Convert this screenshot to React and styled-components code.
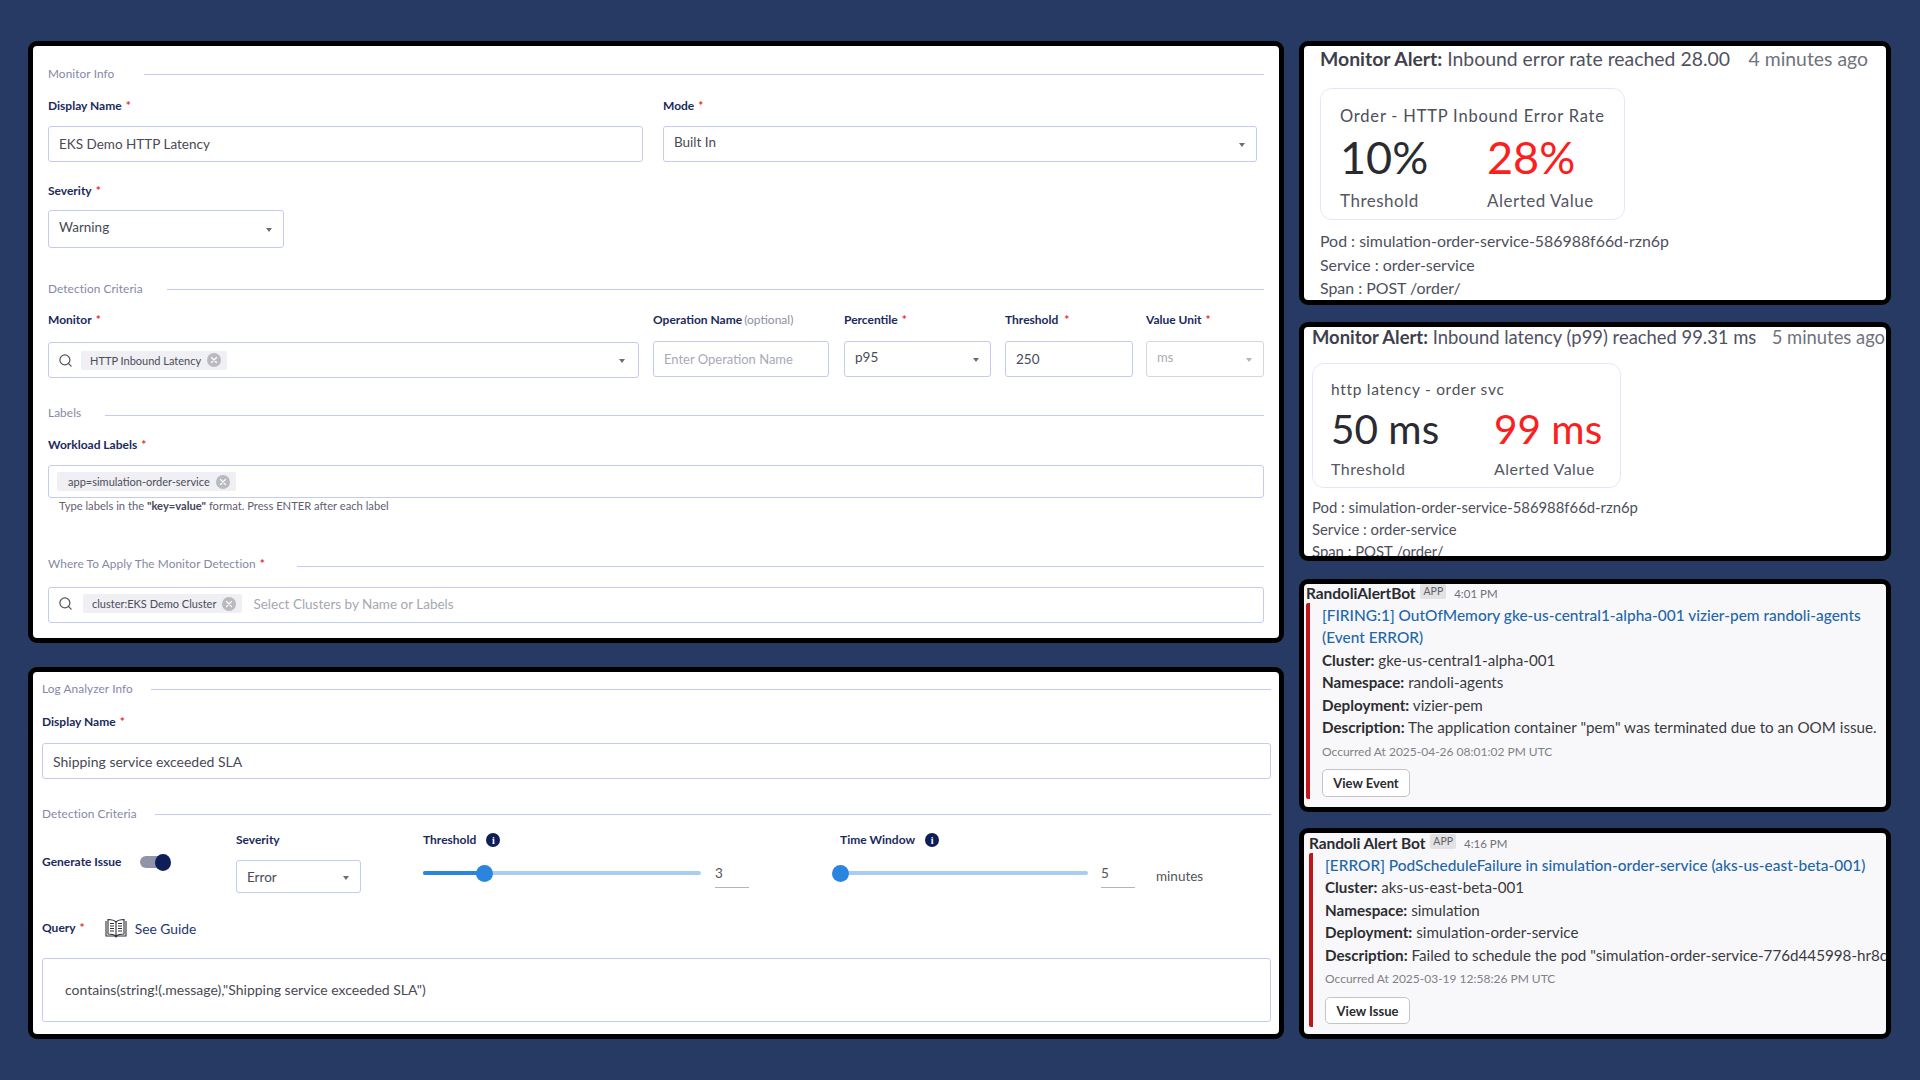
import React from "react";
import styled, { createGlobalStyle } from "styled-components";
import { Search } from "lucide-react";

const Global = createGlobalStyle`
  html, body { margin: 0; padding: 0; background: #263a63; }
  * { box-sizing: border-box; }
`;

const Page = styled.div`
  width: 1920px; height: 1080px; background: #263a63; padding: 41px 0 0 28px;
  display: flex; gap: 15px; align-items: flex-start; overflow: hidden;
  font-family: "Lato", "Noto Sans", sans-serif;
`;
const LeftColumn = styled.div`width: 1256px; display: flex; flex-direction: column; gap: 24px;`;
const RightColumn = styled.div`width: 592px; display: flex; flex-direction: column;`;

const Frame = styled.section`
  height: ${p => p.$h}px; margin-top: ${p => p.$mt || 0}px;
  border: 5px solid #000; border-radius: 9px; background: ${p => p.$bg || "#fff"};
  padding: ${p => p.$pad}; overflow: hidden;
`;

const SectionHead = styled.div`
  display: flex; align-items: center; height: 16px; padding-bottom: 2px; margin-top: ${p => p.$mt || 0}px;
  font-size: 11.8px; color: #8588a4; letter-spacing: .1px; white-space: nowrap;
`;
const SectionRule = styled.div`flex: 1; height: 1px; background: #c3cbef; margin-left: ${p => p.$ml}px; margin-top: ${p => p.$drop ?? 2}px;`;
const Req = styled.span`color: #f0262a; margin-left: ${p => p.$ml ?? 4}px; font-weight: 700;`;

const Row = styled.div`display: flex; margin-top: ${p => p.$mt || 0}px;`;
const Field = styled.div`
  width: ${p => p.$w ? p.$w + "px" : "auto"}; flex: ${p => p.$w ? "none" : 1};
  margin-left: ${p => p.$ml || 0}px; margin-top: ${p => p.$mt || 0}px;
`;
const Label = styled.div`
  height: 16px; line-height: 16px; font-size: 12px; font-weight: 700; color: #1b2a5c;
  margin-bottom: ${p => p.$mb ?? 12}px; margin-top: ${p => p.$mt || 0}px; white-space: nowrap; display: flex; align-items: center;
`;
const Optional = styled.span`font-weight: 400; color: #8d8fa3; margin-left: 2px;`;

const Box = styled.div`
  height: ${p => p.$h || 36}px; width: ${p => p.$w ? p.$w + "px" : "100%"};
  margin-top: ${p => p.$mt || 0}px;
  border: 1px solid ${p => p.$disabled ? "#d5d6de" : "#c3cbef"}; border-radius: 3px; background: #fff;
  display: flex; align-items: center; padding: ${p => p.$pad || "0 11px 0 10px"};
  font-size: ${p => p.$fs || 13.5}px; color: #484a55; white-space: nowrap;
`;
const BoxText = styled.span`flex: 1; margin-top: ${p => p.$up ? -4 : 0}px; color: ${p => p.$muted ? "#a9aab4" : "inherit"}; font-size: ${p => p.$muted ? "13px" : "inherit"};`;
const Caret = styled.span`
  width: 0; height: 0; border-left: 3.5px solid transparent; border-right: 3.5px solid transparent;
  border-top: 4px solid ${p => p.$light ? "#b5b6bf" : "#6b6d78"}; margin-top: 2px; flex: none;
`;
const SearchIcon = styled(Search)`width: 15px; height: 15px; color: #555; flex: none; margin-right: ${p => p.$mr}px;`;

const Chip = styled.span`
  display: inline-flex; align-items: center; height: 19px; padding: 0 6px 0 ${p => p.$pl}px;
  background: #f0eff3; border-radius: 2px; font-size: 11px; color: #4b4d5a; white-space: nowrap;
`;
const ChipClose = styled.span`
  width: 14px; height: 14px; border-radius: 50%; background: #b9b9c0; margin-left: ${p => p.$ml || 6}px;
  display: inline-flex; align-items: center; justify-content: center; flex: none;
`;
const X = () => (
  <ChipClose>
    <svg width="8" height="8" viewBox="0 0 8 8"><path d="M1.5 1.5l5 5M6.5 1.5l-5 5" stroke="#fff" strokeWidth="1.2" strokeLinecap="round" /></svg>
  </ChipClose>
);
const Placeholder = styled.span`font-size: 13.5px; color: #a6a7b2; margin-left: 11px;`;
const Helper = styled.div`font-size: 11.2px; line-height: 14px; height: 14px; margin: 1px 0 0 11px; color: #5f616e; white-space: nowrap;`;
const Key = styled.b`font-weight: 700; color: #44465a;`;

const InfoDot = styled.span`
  width: 14px; height: 14px; border-radius: 50%; background: #0d1f56; color: #fff; margin-left: ${p => p.$ml}px;
  display: inline-flex; align-items: center; justify-content: center; font: 700 10px "Liberation Serif", serif;
`;
const GenerateCol = styled.div`width: 194px; display: flex; align-items: center; margin-top: 19px; height: 22px;`;
const Toggle = styled.span`width: 31px; height: 17px; margin-left: 18px; display: flex; align-items: center;`;
const ToggleTrack = styled.span`width: 24px; height: 12px; border-radius: 6px; background: #8f94a9;`;
const ToggleThumb = styled.span`width: 16px; height: 17px; border-radius: 50%; background: #0d1f56; margin-left: -9px; flex: none;`;
const ControlLabel = styled(Label)`margin-bottom: 12px;`;
const SliderRow = styled.div`display: flex; align-items: flex-start; height: 33px;`;
const Track = styled.div`
  width: ${p => p.$w}px; height: 4px; margin-top: 11px; background: #a9cdf2; border-radius: 2px;
  display: flex; align-items: center; flex: none;
`;
const Fill = styled.div`width: ${p => p.$w}px; height: 4px; background: #2a85de; border-radius: 2px 0 0 2px; flex: none;`;
const Thumb = styled.div`width: 17px; height: 17px; border-radius: 50%; background: #2a85de; margin-left: -8px; flex: none;`;
const NumberInput = styled.div`
  width: 34px; height: 28px; margin-left: ${p => p.$ml}px; border-bottom: 1px solid #b5b5b9;
  font-size: 13.5px; color: #555; line-height: 27px;
`;
const Unit = styled.span`font-size: 13.5px; color: #555; margin: 8px 0 0 21px;`;
const QueryRow = styled.div`display: flex; align-items: center; height: 16px; margin-top: 27px;`;
const GuideLink = styled.span`font-size: 13.8px; color: #27386e; margin-left: 7px;`;
const BookIcon = styled.svg`width: 24px; height: 21px; margin-left: 19px; flex: none;`;

/* alert cards */
const AlertTitle = styled.div`
  display: flex; align-items: baseline; justify-content: space-between; height: ${p => p.$h}px; line-height: ${p => p.$h}px;
  font-size: ${p => p.$fs}px; color: #505260; white-space: nowrap; width: ${p => p.$w}px; margin-top: ${p => p.$mt || 0}px;
`;
const AlertStrong = styled.b`font-weight: 700; color: #3e3f4a;`;
const AlertAgo = styled.span`color: #70727d;`;
const MetricCard = styled.div`
  width: ${p => p.$w}px; height: ${p => p.$h}px; margin-top: 16px; border: 1px solid #e4e5fb; border-radius: 12px;
  padding: ${p => p.$pad};
`;
const MetricTitle = styled.div`height: 20px; line-height: 20px; font-size: ${p => p.$fs}px; letter-spacing: ${p => p.$ls}px; color: #4d4f5a; white-space: nowrap;`;
const MetricGrid = styled.div`display: grid; grid-template-columns: ${p => p.$col}px 1fr; margin-top: ${p => p.$mt}px;`;
const MetricValue = styled.div`
  font-size: ${p => p.$fs}px; line-height: ${p => p.$lh}px; color: ${p => p.$alert ? "#fb2020" : "#2a2b30"}; white-space: nowrap;
`;
const MetricLabel = styled.div`
  height: 20px; line-height: 20px; font-size: ${p => p.$fs}px; letter-spacing: .5px; color: #555763; margin-top: ${p => p.$mt}px; white-space: nowrap;
`;
const Meta = styled.div`font-size: ${p => p.$fs}px; line-height: ${p => p.$lh}px; color: #4d4f5c; margin-top: ${p => p.$mt || 0}px; white-space: nowrap;`;

/* slack */
const SlackHead = styled.div`display: flex; align-items: center; height: 18px; margin-left: ${p => p.$ml}px; margin-top: ${p => p.$mt || 0}px;`;
const BotName = styled.b`font-size: 15.5px; color: #2a2b2e; font-weight: 700; letter-spacing: -.1px;`;
const AppBadge = styled.span`
  font-size: 10.5px; background: #e2e2e4; color: #5f6064; border-radius: 2px; padding: 0 3px; height: 15px; line-height: 15px; margin: -3px 0 0 5px;
`;
const SlackTime = styled.span`font-size: 11.5px; color: #6f7074; margin-left: 8px;`;
const Attachment = styled.div`
  height: ${p => p.$h}px; margin: 1px 0 0 ${p => p.$ml}px; border-left: 4px solid #c0151b; border-radius: 2px;
  padding: ${p => p.$pt}px 0 0 12px; width: 600px;
`;
const SlackLine = styled.div`font-size: 15.2px; line-height: 22.4px; color: #3a3b3e; white-space: nowrap;`;
const SlackLink = styled(SlackLine)`color: #1f67a8; font-size: 15.45px; font-weight: 500;`;
const SlackKey = styled.b`font-weight: 700; color: #2c2d30;`;
const Occurred = styled.div`font-size: 12px; line-height: 16px; color: #808186; margin-top: ${p => p.$mt}px; white-space: nowrap;`;
const SlackButton = styled.div`
  width: ${p => p.$w}px; height: ${p => p.$h}px; margin-top: ${p => p.$mt}px; border: 1px solid #c4c4c8; border-radius: 5px; background: #fff;
  display: flex; align-items: center; justify-content: center; font-size: 13px; font-weight: 700; color: #2a2b2e;
`;

function Select({ children, h, w, disabled, up, mt }) {
  return (
    <Box $h={h} $w={w} $disabled={disabled} $mt={mt}>
      <BoxText $up={up} $muted={disabled}>{children}</BoxText>
      <Caret $light={disabled} />
    </Box>
  );
}

function Book() {
  return (
    <BookIcon viewBox="0 0 24 21" fill="none" stroke="#2f3136" strokeWidth="1.1">
      <path d="M2 3v15h8.5c.8 0 1.1.6 1.5 1 .4-.4.7-1 1.5-1H22V3" />
      <path d="M4 1.5c3 0 6 .5 8 2.5 2-2 5-2.5 8-2.5V16c-3 0-6 .5-8 2-2-1.500-5-2-8-2z" fill="#fff" />
      <path d="M12 4v14M6 5.500h4M6 8h4M6 10.500h4M6 13h4M14 5.500h4M14 8h4M14 10.500h4M14 13h4" />
    </BookIcon>
  );
}

function MonitorForm() {
  return (
    <Frame $h={602} $pad="20px 15px 0">
      <SectionHead>Monitor Info<SectionRule $ml={30} /></SectionHead>
      <Row $mt={16}>
        <Field $w={595}>
          <Label>Display Name<Req>*</Req></Label>
          <Box>EKS Demo HTTP Latency</Box>
        </Field>
        <Field $w={594} $ml={20}>
          <Label>Mode<Req>*</Req></Label>
          <Select up>Built In</Select>
        </Field>
      </Row>
      <Field $w={236} $mt={21}>
        <Label $mb={11}>Severity<Req>*</Req></Label>
        <Select h={38} up>Warning</Select>
      </Field>
      <SectionHead $mt={33}>Detection Criteria<SectionRule $ml={24} /></SectionHead>
      <Row $mt={15}>
        <Field $w={591}>
          <Label $mb={14}>Monitor<Req>*</Req></Label>
          <Box $pad="0 13px 0 9px">
            <SearchIcon $mr={8} />
            <Chip $pl={9}>HTTP Inbound Latency<X /></Chip>
            <BoxText />
            <Caret />
          </Box>
        </Field>
        <Field $w={176} $ml={14}>
          <Label $mb={13}>Operation Name<Optional>(optional)</Optional></Label>
          <Box><BoxText $muted>Enter Operation Name</BoxText></Box>
        </Field>
        <Field $w={147} $ml={15}>
          <Label $mb={13}>Percentile<Req>*</Req></Label>
          <Select up>p95</Select>
        </Field>
        <Field $w={128} $ml={14}>
          <Label $mb={13}>Threshold<Req $ml={6}>*</Req></Label>
          <Box>250</Box>
        </Field>
        <Field $w={118} $ml={13}>
          <Label $mb={13}>Value Unit<Req>*</Req></Label>
          <Select disabled up>ms</Select>
        </Field>
      </Row>
      <SectionHead $mt={27}>Labels<SectionRule $ml={24} $drop={6} /></SectionHead>
      <Label $mt={16} $mb={12}>Workload Labels<Req>*</Req></Label>
      <Box $h={33} $pad="0 8px">
        <Chip $pl={11}>app=simulation-order-service<X /></Chip>
      </Box>
      <Helper>Type labels in the <Key>"key=value"</Key> format. Press ENTER after each label</Helper>
      <SectionHead $mt={43}>Where To Apply The Monitor Detection<Req>*</Req><SectionRule $ml={32} $drop={6} /></SectionHead>
      <Box $mt={15} $pad="0 9px 3px">
        <SearchIcon $mr={10} />
        <Chip $pl={9}>cluster:EKS Demo Cluster<X /></Chip>
        <Placeholder>Select Clusters by Name or Labels</Placeholder>
      </Box>
    </Frame>
  );
}

function LogAnalyzerForm() {
  return (
    <Frame $h={372} $pad="9px 8px 0 9px">
      <SectionHead>Log Analyzer Info<SectionRule $ml={18} /></SectionHead>
      <Label $mt={17} $mb={13}>Display Name<Req>*</Req></Label>
      <Box $fs={14}>Shipping service exceeded SLA</Box>
      <SectionHead $mt={27}>Detection Criteria<SectionRule $ml={18} /></SectionHead>
      <Row $mt={10}>
        <GenerateCol>
          <Label $mb={0}>Generate Issue</Label>
          <Toggle><ToggleTrack /><ToggleThumb /></Toggle>
        </GenerateCol>
        <Field $w={187}>
          <ControlLabel>Severity</ControlLabel>
          <Select h={33} w={125}>Error</Select>
        </Field>
        <Field $w={417}>
          <ControlLabel>Threshold<InfoDot $ml={10}>i</InfoDot></ControlLabel>
          <SliderRow>
            <Track $w={278}><Fill $w={61} /><Thumb /></Track>
            <NumberInput $ml={14}>3</NumberInput>
          </SliderRow>
        </Field>
        <Field>
          <ControlLabel>Time Window<InfoDot $ml={10}>i</InfoDot></ControlLabel>
          <SliderRow>
            <Track $w={248}><Fill $w={0} /><Thumb /></Track>
            <NumberInput $ml={13}>5</NumberInput>
            <Unit>minutes</Unit>
          </SliderRow>
        </Field>
      </Row>
      <QueryRow>
        <Label $mb={0}>Query<Req>*</Req></Label>
        <Book />
        <GuideLink>See Guide</GuideLink>
      </QueryRow>
      <Box $h={64} $mt={22} $pad="0 22px 2px" $fs={14}>contains(string!(.message),"Shipping service exceeded SLA")</Box>
    </Frame>
  );
}

function AlertOne() {
  return (
    <Frame $h={264} $pad="0 0 0 16px">
      <AlertTitle $h={26} $fs={19.4} $w={548}>
        <span><AlertStrong>Monitor Alert:</AlertStrong> Inbound error rate reached 28.00</span>
        <AlertAgo>4 minutes ago</AlertAgo>
      </AlertTitle>
      <MetricCard $w={305} $h={132} $pad="17px 18px 0 19px">
        <MetricTitle $fs={16.5} $ls={0.8}>Order - HTTP Inbound Error Rate</MetricTitle>
        <MetricGrid $col={147} $mt={6}>
          <div><MetricValue $fs={45} $lh={50}>10%</MetricValue><MetricLabel $fs={17} $mt={9}>Threshold</MetricLabel></div>
          <div><MetricValue $fs={45} $lh={50} $alert>28%</MetricValue><MetricLabel $fs={17} $mt={9}>Alerted Value</MetricLabel></div>
        </MetricGrid>
      </MetricCard>
      <Meta $fs={15.9} $lh={23.5} $mt={9}>Pod : simulation-order-service-586988f66d-rzn6p</Meta>
      <Meta $fs={15.9} $lh={23.5}>Service : order-service</Meta>
      <Meta $fs={15.9} $lh={23.5}>Span : POST /order/</Meta>
    </Frame>
  );
}

function AlertTwo() {
  return (
    <Frame $h={239} $mt={17} $pad="0 0 0 8px">
      <AlertTitle $h={20} $fs={18.4} $w={573}>
        <span><AlertStrong>Monitor Alert:</AlertStrong> Inbound latency (p99) reached 99.31 ms</span>
        <AlertAgo>5 minutes ago</AlertAgo>
      </AlertTitle>
      <MetricCard $w={309} $h={125} $pad="15px 0 0 18px">
        <MetricTitle $fs={15.5} $ls={0.7}>http latency - order svc</MetricTitle>
        <MetricGrid $col={163} $mt={7}>
          <div><MetricValue $fs={40.5} $lh={46}>50 ms</MetricValue><MetricLabel $fs={16} $mt={7}>Threshold</MetricLabel></div>
          <div><MetricValue $fs={40.5} $lh={46} $alert>99 ms</MetricValue><MetricLabel $fs={16} $mt={7}>Alerted Value</MetricLabel></div>
        </MetricGrid>
      </MetricCard>
      <Meta $fs={14.85} $lh={22} $mt={8}>Pod : simulation-order-service-586988f66d-rzn6p</Meta>
      <Meta $fs={14.85} $lh={22}>Service : order-service</Meta>
      <Meta $fs={14.85} $lh={22}>Span : POST /order/</Meta>
    </Frame>
  );
}

function SlackOne() {
  return (
    <Frame $h={233} $mt={18} $bg="#f8f8fb" $pad="0">
      <SlackHead $ml={2}><BotName>RandoliAlertBot</BotName><AppBadge>APP</AppBadge><SlackTime>4:01 PM</SlackTime></SlackHead>
      <Attachment $h={196} $ml={2} $pt={1}>
        <SlackLink>[FIRING:1] OutOfMemory gke-us-central1-alpha-001 vizier-pem randoli-agents</SlackLink>
        <SlackLink>(Event ERROR)</SlackLink>
        <SlackLine><SlackKey>Cluster:</SlackKey> gke-us-central1-alpha-001</SlackLine>
        <SlackLine><SlackKey>Namespace:</SlackKey> randoli-agents</SlackLine>
        <SlackLine><SlackKey>Deployment:</SlackKey> vizier-pem</SlackLine>
        <SlackLine><SlackKey>Description:</SlackKey> The application container "pem" was terminated due to an OOM issue.</SlackLine>
        <Occurred $mt={6}>Occurred At 2025-04-26 08:01:02 PM UTC</Occurred>
        <SlackButton $w={88} $h={28} $mt={9}>View Event</SlackButton>
      </Attachment>
    </Frame>
  );
}

function SlackTwo() {
  return (
    <Frame $h={211} $mt={16} $bg="#f8f8fb" $pad="1px 0 0">
      <SlackHead $ml={5}><BotName>Randoli Alert Bot</BotName><AppBadge>APP</AppBadge><SlackTime>4:16 PM</SlackTime></SlackHead>
      <Attachment $h={174} $ml={5} $pt={1}>
        <SlackLink>[ERROR] PodScheduleFailure in simulation-order-service (aks-us-east-beta-001)</SlackLink>
        <SlackLine><SlackKey>Cluster:</SlackKey> aks-us-east-beta-001</SlackLine>
        <SlackLine><SlackKey>Namespace:</SlackKey> simulation</SlackLine>
        <SlackLine><SlackKey>Deployment:</SlackKey> simulation-order-service</SlackLine>
        <SlackLine><SlackKey>Description:</SlackKey> Failed to schedule the pod "simulation-order-service-776d445998-hr8c</SlackLine>
        <Occurred $mt={5}>Occurred At 2025-03-19 12:58:26 PM UTC</Occurred>
        <SlackButton $w={85} $h={27} $mt={10}>View Issue</SlackButton>
      </Attachment>
    </Frame>
  );
}

export default function App() {
  return (
    <>
      <Global />
      <Page>
        <LeftColumn>
          <MonitorForm />
          <LogAnalyzerForm />
        </LeftColumn>
        <RightColumn>
          <AlertOne />
          <AlertTwo />
          <SlackOne />
          <SlackTwo />
        </RightColumn>
      </Page>
    </>
  );
}
